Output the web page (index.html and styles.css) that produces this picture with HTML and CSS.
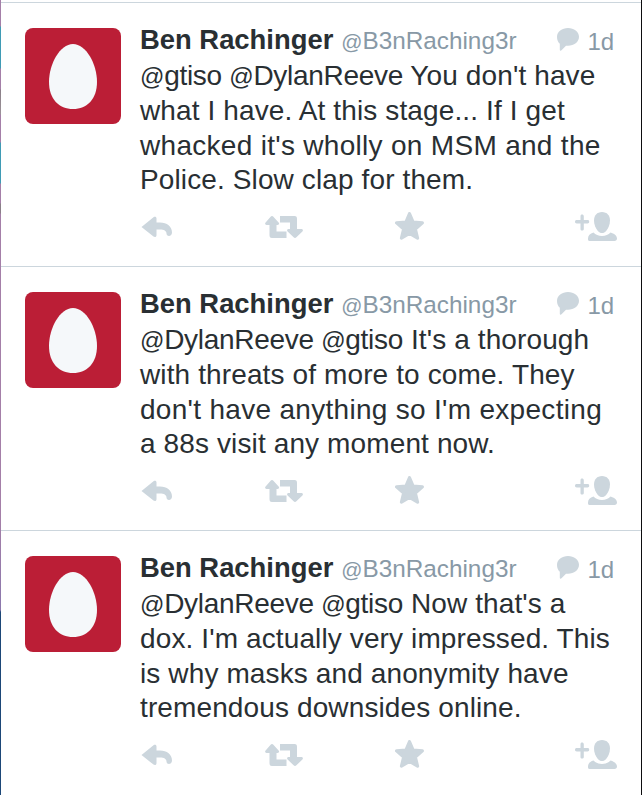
FILE: index.html
```html
<!DOCTYPE html>
<html lang="en">
<head>
<meta charset="utf-8">
<title>Tweets</title>
<link rel="stylesheet" href="styles.css">
</head>
<body>
<svg class="defs" width="0" height="0" aria-hidden="true">
  <symbol id="egg" viewBox="0 0 48 65"><path d="M24 0C37 0 48 20 48 38C48 55 38 65 24 65C10 65 0 55 0 38C0 20 11 0 24 0Z"/></symbol>
  <symbol id="bubble" viewBox="0 0 22 23"><path d="M11 0C17 0 22 3.600 22 8.800C22 14 17 17.800 11 17.800L9 17.800L4.500 22.300C3.500 23.200 2.800 22.700 2.800 21.500L2.800 15.800C1 14.200 0 11.800 0 8.800C0 3.600 5 0 11 0Z"/></symbol>
  <symbol id="reply" viewBox="0 0 31 22"><path d="M.5 11L12.500 1.200C14 .2 15.500.8 15.500 2.500V6.500H19C26 6.500 31 10.500 31 16.500C31 18.800 29.500 20 28 20C26.500 20 25.500 19 25.500 17.500C25.500 15 23 13.500 19 13.500H15.500V19C15.500 21 14 21.500 12.500 20.600Z"/></symbol>
  <symbol id="retweet" viewBox="0 0 38 22"><path d="M7 0C7.600 0 8 .3 8.400.7L13.600 6.500C14.600 7.500 14 9 12.600 9H11.500V15.500H21.500V22H7C5 22 4.500 21 4.500 19V9H1.600C.2 9-.4 7.500.6 6.500L5.600.7C6 .3 6.400 0 7 0Z"/><path d="M15 0H29.500C31.500 0 32 1 32 3V13H36.400C37.800 13 38.400 14.500 37.400 15.500L31.400 21.300C30.600 22.200 29.400 22.200 28.600 21.300L22.600 15.500C21.600 14.500 22.200 13 23.600 13H25V6.500H15Z"/></symbol>
  <symbol id="star" viewBox="0 0 28 27"><path d="M14 1.500L17.500 9.800L26.500 10.500L19.700 16.400L21.800 25.300L14 20.600L6.200 25.300L8.300 16.400L1.500 10.500L10.500 9.800Z" stroke-width="3" stroke-linejoin="round"/></symbol>
  <symbol id="follow" viewBox="0 0 42 29"><path d="M5.500 4.500C5.500 3 6 2.500 7 2.500C8 2.500 8.800 3 8.800 4.500V8H12.500C13.700 8 14.200 8.700 14.200 9.700C14.200 10.700 13.700 11.400 12.500 11.400H8.800V17C8.800 18 8 18.500 7 18.500C6 18.500 5.500 18 5.500 17V11.400H1.800C.6 11.400 0 10.700 0 9.700C0 8.700.6 8 1.800 8H5.500Z"/><path d="M27 0C32 0 35 3.500 35 8.500C35 13 33 16.500 31.500 18.500C30 20.500 28.500 21 27 21C25.500 21 24 20.500 22.500 18.500C21 16.500 19 13 19 8.500C19 3.500 22 0 27 0Z"/><path d="M18.500 20.500C20.500 22.500 23.500 24 27 24C30.500 24 33.500 22.500 35.500 20.500C39 21.500 42 23.500 42 26.500C42 28 41 29 39.500 29H14.500C13 29 13 28 13 26.500C13 23.500 15 21.500 18.500 20.500Z"/></symbol>
</svg>
<main class="screen">
  <article class="tweet">
    <div class="avatar"><svg class="egg"><use href="#egg"/></svg></div>
    <div class="content">
      <header class="head">
        <strong class="name">Ben Rachinger</strong>
        <span class="handle"><span class="at">@</span>B3nRaching3r</span>
        <svg class="bubble"><use href="#bubble"/></svg>
        <span class="time">1d</span>
      </header>
      <p class="text"><span class="mention"><span class="at">@</span>gtiso <span class="at">@</span>DylanReeve</span> You don't have<br>what I have. At this stage... If I get<br><span class="loose">whacked it's wholly on MSM and the</span><br>Police. Slow clap for them.</p>
      <div class="actions">
        <svg class="ico i-reply"><use href="#reply"/></svg>
        <svg class="ico i-retweet"><use href="#retweet"/></svg>
        <svg class="ico i-star"><use href="#star"/></svg>
        <svg class="ico i-follow"><use href="#follow"/></svg>
      </div>
    </div>
  </article>
  <article class="tweet">
    <div class="avatar"><svg class="egg"><use href="#egg"/></svg></div>
    <div class="content">
      <header class="head">
        <strong class="name">Ben Rachinger</strong>
        <span class="handle"><span class="at">@</span>B3nRaching3r</span>
        <svg class="bubble"><use href="#bubble"/></svg>
        <span class="time">1d</span>
      </header>
      <p class="text"><span class="mention"><span class="at">@</span>DylanReeve <span class="at">@</span>gtiso</span> It's a thorough<br>with threats of more to come. They<br><span class="loose">don't have anything so I'm expecting</span><br>a 88s visit any moment now.</p>
      <div class="actions">
        <svg class="ico i-reply"><use href="#reply"/></svg>
        <svg class="ico i-retweet"><use href="#retweet"/></svg>
        <svg class="ico i-star"><use href="#star"/></svg>
        <svg class="ico i-follow"><use href="#follow"/></svg>
      </div>
    </div>
  </article>
  <article class="tweet">
    <div class="avatar"><svg class="egg"><use href="#egg"/></svg></div>
    <div class="content">
      <header class="head">
        <strong class="name">Ben Rachinger</strong>
        <span class="handle"><span class="at">@</span>B3nRaching3r</span>
        <svg class="bubble"><use href="#bubble"/></svg>
        <span class="time">1d</span>
      </header>
      <p class="text"><span class="mention"><span class="at">@</span>DylanReeve <span class="at">@</span>gtiso</span> Now that's a<br>dox. I'm actually very impressed. This<br>is why masks and anonymity have<br>tremendous downsides online.</p>
      <div class="actions">
        <svg class="ico i-reply"><use href="#reply"/></svg>
        <svg class="ico i-retweet"><use href="#retweet"/></svg>
        <svg class="ico i-star"><use href="#star"/></svg>
        <svg class="ico i-follow"><use href="#follow"/></svg>
      </div>
    </div>
  </article>
</main>
</body>
</html>
```
FILE: styles.css
```css
* { box-sizing: border-box; }
html, body { margin: 0; padding: 0; background: #fff; }
body {
  width: 642px;
  height: 795px;
  overflow: hidden;
  font-family: "Liberation Sans", Arial, sans-serif;
  color: #292f33;
  background: #0d0d0f;
}
.defs { display: block; height: 0; }
.screen {
  height: 795px;
  margin-right: 1px;
  padding: 2px 0 0 1px;
  background-color: #fff;
  background-repeat: no-repeat;
  background-size: 1px 795px;
  background-image: linear-gradient(to bottom,
    #a47fa8 0, #a47fa8 26px,
    #3f9bb5 27px, #3f9bb5 68px,
    #a47fa8 69px, #a47fa8 89px,
    #8a7f88 90px, #9b9298 114px,
    #a47fa8 115px, #a47fa8 142px,
    #3f9bb5 143px, #3f9bb5 183px,
    #a47fa8 184px, #a47fa8 203px,
    #8a7f88 204px, #8a7f88 213px,
    #a47fa8 214px, #a47fa8 520px,
    #8b78ad 610px,
    #1d4878 612px, #1d4878 795px);
}
.tweet {
  display: flex;
  height: 264px;
  border-top: 1px solid #ccd6dd;
  padding: 25px 0 0 24px;
}
.avatar {
  flex: none;
  width: 96px;
  height: 96px;
  border-radius: 8px;
  background: #bb1e36;
  display: flex;
  align-items: center;
  justify-content: center;
}
.egg { width: 48px; height: 65px; fill: #f5f8fa; }
.content { flex: 1; margin-left: 19px; min-width: 0; }
.head {
  display: flex;
  align-items: flex-start;
  height: 31px;
  white-space: nowrap;
}
.name { font-size: 27.400px; font-weight: 700; line-height: 24px; }
.handle { font-size: 24.300px; color: #8899a6; margin-left: 8px; line-height: 26px; }
.bubble { width: 22px; height: 23px; fill: #ccd6dd; margin-left: 40px; flex: none; }
.time { font-size: 24px; color: #8899a6; margin-left: 9px; line-height: 27px; }
.at { font-size: .86em; }
.text {
  margin: 0;
  font-size: 28px;
  line-height: 34.300px;
  letter-spacing: .12px;
  white-space: nowrap;
}
.mention { letter-spacing: -.3px; }
.loose { letter-spacing: .3px; }
.actions {
  display: grid;
  grid-template-columns: 124px 130px 180px auto;
  align-items: start;
  padding-left: 1px;
  margin-top: 15px;
}
.ico { display: block; fill: #ccd6dd; stroke: #ccd6dd; stroke-width: 0; }
.i-reply { width: 31px; height: 22px; margin-top: 4px; }
.i-retweet { width: 38px; height: 22px; margin-top: 4px; }
.i-star { width: 29px; height: 28px; margin-top: 0; }
.i-follow { width: 42px; height: 29px; margin-top: 0; }
```
